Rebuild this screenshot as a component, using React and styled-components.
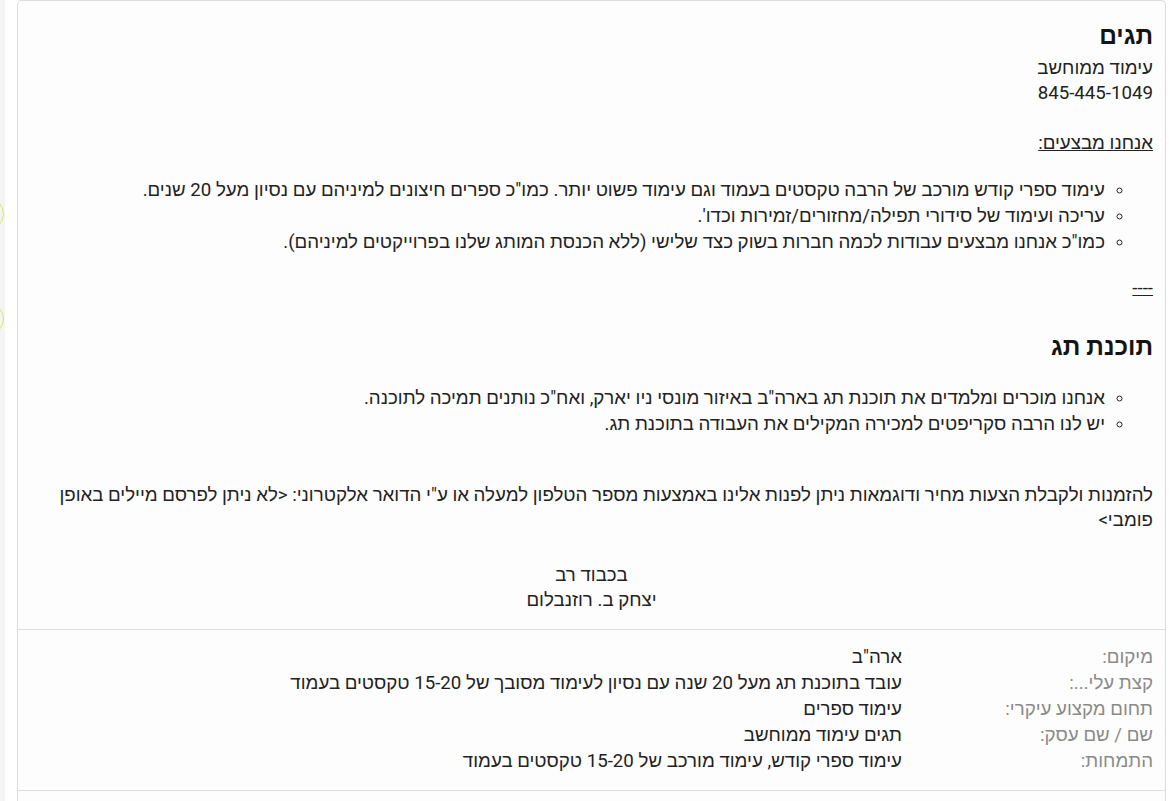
import React from "react";
import styled, { createGlobalStyle } from "styled-components";

const GlobalStyle = createGlobalStyle`
  html, body {
    margin: 0;
    padding: 0;
    background: #ffffff;
  }
  body {
    font-family: Roboto, sans-serif;
    color: #222222;
  }
`;

const Page = styled.div`
  display: flex;
  min-height: 801px;
  direction: ltr;
`;

const SideRail = styled.div`
  position: relative;
  width: 5px;
  flex: 0 0 5px;
  background: #f4f4f4;
  overflow: hidden;
`;

const Ring = styled.span`
  position: absolute;
  left: -28px;
  width: 30px;
  height: 30px;
  border-radius: 50%;
  border: 1px solid #d9e46e;
  top: ${(p) => p.$top}px;
`;

const Card = styled.main`
  flex: 1;
  margin: 0 3px 0 12px;
  background: #fdfdfd;
  border: 1px solid #dcdcdc;
  border-bottom: none;
  border-radius: 5px 5px 0 0;
  direction: rtl;
  display: flex;
  flex-direction: column;
`;

const Body = styled.section`
  padding: 19px 12px 16px;
  font-size: 18.7px;
  line-height: 25px;
`;

const Heading = styled.h2`
  margin: ${(p) => p.$top || 0}px 0 4px;
  font-size: 24.5px;
  line-height: 32px;
  font-weight: 700;
  color: #141414;
`;

const Para = styled.p`
  margin: ${(p) => p.$top || 0}px 0 0;
  text-align: ${(p) => (p.$center ? "center" : "start")};
`;

const Underlined = styled.span`
  text-decoration: underline;
`;

const BulletList = styled.ul`
  margin: ${(p) => p.$top || 0}px 0 0;
  padding: 0 48px 0 0;
  list-style: circle;
`;

const Item = styled.li`
  line-height: 26px;
  &::marker {
    font-size: 16px;
  }
`;

const Rule = styled.div`
  margin-top: 21px;
  text-decoration: underline;
  text-underline-offset: 1px;
`;

const Details = styled.section`
  border-top: 1px solid #dedede;
  padding: 14px 12px 16px;
  display: grid;
  grid-template-columns: 251px 1fr;
  font-size: 18.7px;
  line-height: 26px;
`;

const Label = styled.div`
  color: #8a8a8a;
`;

const Value = styled.div`
  color: #222222;
`;

const Tail = styled.section`
  border-top: 1px solid #dedede;
  flex: 1;
  min-height: 20px;
`;

const details = [
  ["מיקום:", 'ארה"ב'],
  ["קצת עלי...:", "עובד בתוכנת תג מעל 20 שנה עם נסיון לעימוד מסובך של 15-20 טקסטים בעמוד"],
  ["תחום מקצוע עיקרי:", "עימוד ספרים"],
  ["שם / שם עסק:", "תגים עימוד ממוחשב"],
  ["התמחות:", "עימוד ספרי קודש, עימוד מורכב של 15-20 טקסטים בעמוד"],
];

export default function App() {
  return (
    <>
      <GlobalStyle />
      <Page>
        <SideRail>
          <Ring $top={198} />
          <Ring $top={303} />
        </SideRail>
        <Card>
          <Body>
            <Heading>תגים</Heading>
            <Para>
              עימוד ממוחשב
              <br />
              845-445-1049
              <br />
              <br />
              <Underlined>אנחנו מבצעים:</Underlined>
            </Para>
            <BulletList $top={21}>
              <Item>
                עימוד ספרי קודש מורכב של הרבה טקסטים בעמוד וגם עימוד פשוט יותר. כמו"כ ספרים חיצונים למיניהם עם נסיון מעל 20 שנים.
              </Item>
              <Item>עריכה ועימוד של סידורי תפילה/מחזורים/זמירות וכדו'.</Item>
              <Item>
                כמו"כ אנחנו מבצעים עבודות לכמה חברות בשוק כצד שלישי (ללא הכנסת המותג שלנו בפרוייקטים למיניהם).
              </Item>
            </BulletList>
            <Rule>----</Rule>
            <Heading $top={30}>תוכנת תג</Heading>
            <BulletList $top={22}>
              <Item>
                אנחנו מוכרים ומלמדים את תוכנת תג בארה"ב באיזור מונסי ניו יארק, ואח"כ נותנים תמיכה לתוכנה.
              </Item>
              <Item>יש לנו הרבה סקריפטים למכירה המקילים את העבודה בתוכנת תג.</Item>
            </BulletList>
            <Para $top={46}>
              להזמנות ולקבלת הצעות מחיר ודוגמאות ניתן לפנות אלינו באמצעות מספר הטלפון למעלה או ע"י הדואר אלקטרוני: &lt;לא ניתן לפרסם מיילים באופן פומבי&gt;
            </Para>
            <Para $top={30} $center>
              בכבוד רב
              <br />
              יצחק ב. רוזנבלום
            </Para>
          </Body>
          <Details>
            {details.map(([label, value]) => (
              <React.Fragment key={label}>
                <Label>{label}</Label>
                <Value>{value}</Value>
              </React.Fragment>
            ))}
          </Details>
          <Tail />
        </Card>
      </Page>
    </>
  );
}
